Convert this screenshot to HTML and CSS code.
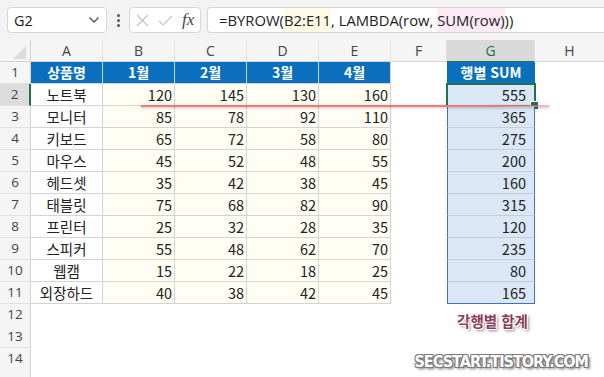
FILE: index.html
```html
<!DOCTYPE html>
<html lang="ko">
<head>
    <meta charset="UTF-8">
    <title>BYROW 예제</title>
    <link rel="stylesheet" href="styles.css">
</head>
<body>

    <!-- 수식 입력줄 -->
    <div class="fbar">
        <div class="namebox">
            <span>G2</span>
            <svg width="12" height="8" viewBox="0 0 12 8"><path d="M1.5 1.5 L6 6 L10.5 1.5" fill="none" stroke="#555" stroke-width="1.3"/></svg>
        </div>
        <div class="dots"><i></i><i></i><i></i></div>
        <div class="fxbox">
            <svg width="13" height="13" viewBox="0 0 13 13"><path d="M1 1 L12 12 M12 1 L1 12" stroke="#c4c4c4" stroke-width="1.2"/></svg>
            <svg width="15" height="13" viewBox="0 0 15 13"><path d="M1 7 L5 11 L14 2" fill="none" stroke="#c4c4c4" stroke-width="1.2"/></svg>
            <span class="fx">fx</span>
        </div>
        <div class="formula">
            =BYROW(<span class="ref-a">B2:E11</span>, LAMBDA(row, <span class="ref-b">SUM(row)</span>))
        </div>
    </div>

    <!-- 시트 -->
    <div class="sheet">
        <div class="row colhead">
            <div class="corner"></div>
            <div class="ch">A</div><div class="ch">B</div><div class="ch">C</div><div class="ch">D</div>
            <div class="ch">E</div><div class="ch">F</div><div class="ch active">G</div><div class="ch last">H</div>
        </div>

        <div class="row">
            <div class="rh">1</div>
            <div class="c head">상품명</div><div class="c head">1월</div><div class="c head">2월</div>
            <div class="c head">3월</div><div class="c head">4월</div>
            <div class="c"></div><div class="c head g">행별 SUM</div><div class="c"></div>
        </div>
        <div class="row">
            <div class="rh active">2</div>
            <div class="c name">노트북</div><div class="c num">120</div><div class="c num">145</div>
            <div class="c num">130</div><div class="c num">160</div>
            <div class="c"></div><div class="c sum top sel">555</div><div class="c"></div>
        </div>
        <div class="row">
            <div class="rh">3</div>
            <div class="c name">모니터</div><div class="c num">85</div><div class="c num">78</div>
            <div class="c num">92</div><div class="c num">110</div>
            <div class="c"></div><div class="c sum">365</div><div class="c"></div>
        </div>
        <div class="row">
            <div class="rh">4</div>
            <div class="c name">키보드</div><div class="c num">65</div><div class="c num">72</div>
            <div class="c num">58</div><div class="c num">80</div>
            <div class="c"></div><div class="c sum">275</div><div class="c"></div>
        </div>
        <div class="row">
            <div class="rh">5</div>
            <div class="c name">마우스</div><div class="c num">45</div><div class="c num">52</div>
            <div class="c num">48</div><div class="c num">55</div>
            <div class="c"></div><div class="c sum">200</div><div class="c"></div>
        </div>
        <div class="row">
            <div class="rh">6</div>
            <div class="c name">헤드셋</div><div class="c num">35</div><div class="c num">42</div>
            <div class="c num">38</div><div class="c num">45</div>
            <div class="c"></div><div class="c sum">160</div><div class="c"></div>
        </div>
        <div class="row">
            <div class="rh">7</div>
            <div class="c name">태블릿</div><div class="c num">75</div><div class="c num">68</div>
            <div class="c num">82</div><div class="c num">90</div>
            <div class="c"></div><div class="c sum">315</div><div class="c"></div>
        </div>
        <div class="row">
            <div class="rh">8</div>
            <div class="c name">프린터</div><div class="c num">25</div><div class="c num">32</div>
            <div class="c num">28</div><div class="c num">35</div>
            <div class="c"></div><div class="c sum">120</div><div class="c"></div>
        </div>
        <div class="row">
            <div class="rh">9</div>
            <div class="c name">스피커</div><div class="c num">55</div><div class="c num">48</div>
            <div class="c num">62</div><div class="c num">70</div>
            <div class="c"></div><div class="c sum">235</div><div class="c"></div>
        </div>
        <div class="row">
            <div class="rh">10</div>
            <div class="c name">웹캠</div><div class="c num">15</div><div class="c num">22</div>
            <div class="c num">18</div><div class="c num">25</div>
            <div class="c"></div><div class="c sum">80</div><div class="c"></div>
        </div>
        <div class="row">
            <div class="rh">11</div>
            <div class="c name">외장하드</div><div class="c num">40</div><div class="c num">38</div>
            <div class="c num">42</div><div class="c num">45</div>
            <div class="c"></div><div class="c sum bottom">165</div><div class="c"></div>
        </div>
        <div class="row">
            <div class="rh">12</div>
            <div class="blank"></div>
            <div class="note">각행별 합계</div>
        </div>
        <div class="row">
            <div class="rh">13</div>
        </div>
        <div class="row">
            <div class="rh">14</div>
            <div class="blank"></div>
            <div class="mark">SECSTART.TISTORY.COM</div>
        </div>
        <div class="row">
            <div class="rh"></div>
        </div>

        <!-- 2행 강조선 -->
        <div class="redline"></div>
    </div>

</body>
</html>
```

FILE: styles.css
```css
* {
    margin: 0;
    padding: 0;
    box-sizing: border-box;
}

body {
    font-family: "Noto Sans CJK KR", "Noto Sans", sans-serif;
    background-color: #fff;
    color: #222;
    width: 604px;
    height: 377px;
    overflow: hidden;
}

/* 수식 입력줄 */
.fbar {
    display: flex;
    align-items: center;
    height: 40px;
    padding-left: 7px;
    background-color: #f3f3f3;
}

.namebox {
    display: flex;
    align-items: center;
    justify-content: space-between;
    width: 100px;
    height: 26px;
    padding: 0 6px 0 6px;
    background-color: #fff;
    border: 1px solid #d6d6d6;
    border-radius: 4px;
    font-family: "Open Sans", sans-serif;
    font-size: 14.5px;
    color: #222;
}

.dots {
    width: 22px;
    display: flex;
    flex-direction: column;
    align-items: center;
    gap: 2px;
}

.dots i {
    width: 3px;
    height: 3px;
    border-radius: 50%;
    background-color: #555;
}

.fxbox {
    display: flex;
    align-items: center;
    gap: 9px;
    width: 72px;
    height: 26px;
    padding-left: 6px;
    background-color: #fff;
    border: 1px solid #d6d6d6;
    border-radius: 4px;
}

.fx {
    font-family: "Liberation Serif", serif;
    font-style: italic;
    font-size: 17px;
    color: #444;
}

.formula {
    flex: 1;
    height: 26px;
    margin-left: 6px;
    padding-left: 11px;
    background-color: #fff;
    border: 1px solid #d6d6d6;
    border-right: none;
    border-radius: 4px 0 0 4px;
    font-family: "Open Sans", sans-serif;
    font-size: 14.8px;
    line-height: 24px;
    white-space: nowrap;
    color: #222;
}

.ref-a {
    background-color: #fffbe6;
    display: inline-block;
}

.ref-b {
    background-color: #fdeaf6;
    display: inline-block;
}

/* 시트 */
.sheet {
    position: relative;
}

.row {
    display: grid;
    grid-template-columns: 31px 72px 72px 72px 72px 72px 56px 88px 1fr;
    height: 22px;
}

.colhead {
    background-color: #f5f5f5;
    border-bottom: 1px solid #d4d4d4;
}

.corner {
    position: relative;
    border-right: 1px solid #d4d4d4;
}

.corner::after {
    content: "";
    position: absolute;
    right: 4px;
    bottom: 4px;
    border-style: solid;
    border-width: 0 0 13px 13px;
    border-color: transparent transparent #dcdcdc transparent;
}

.ch {
    text-align: center;
    font-family: "Open Sans", sans-serif;
    font-size: 14px;
    line-height: 21px;
    color: #444;
    border-right: 1px solid #e0e0e0;
}

.ch.last {
    border-right: none;
}

.ch.active {
    background-color: #d9d9d9;
    color: #217346;
    border-bottom: 2px solid #217346;
}

.rh {
    text-align: center;
    font-family: "Open Sans", sans-serif;
    font-size: 13.5px;
    line-height: 21px;
    color: #444;
    background-color: #f5f5f5;
    border-right: 1px solid #d4d4d4;
    border-bottom: 1px solid #e2e2e2;
}

.rh.active {
    background-color: #dcdcdc;
    border-right: 2px solid #217346;
}

.c {
    font-size: 14.5px;
    line-height: 21px;
    white-space: nowrap;
}

.head {
    background-color: #0a6fbd;
    color: #fff;
    font-weight: bold;
    font-size: 14px;
    text-align: center;
    border-right: 1px solid #d4d4d4;
    border-bottom: 1px solid #d4d4d4;
}

.head.g {
    border-right: none;
    border-bottom: none;
}

.name {
    text-align: center;
    background-color: #fff;
    border-right: 1px solid #d4d4d4;
    border-bottom: 1px solid #d4d4d4;
}

.num {
    text-align: right;
    padding-right: 2px;
    background-color: #fffef4;
    border-right: 1px solid #d4d4d4;
    border-bottom: 1px solid #d4d4d4;
}

.sum {
    position: relative;
    text-align: right;
    padding-right: 8px;
    background-color: #dae7f6;
    border-left: 1px solid #3f6fcc;
    border-right: 1px solid #3f6fcc;
    border-bottom: 1px solid #c9ccd2;
}

.sum.bottom {
    border-bottom: 1px solid #3f6fcc;
}

/* 선택된 셀 */
.sel::before {
    content: "";
    position: absolute;
    left: -2px;
    top: -1px;
    right: -2px;
    bottom: -2px;
    border: 2px solid #217346;
}

.sel::after {
    content: "";
    position: absolute;
    right: -5px;
    bottom: -5px;
    width: 7px;
    height: 7px;
    background-color: #217346;
    border: 1px solid #fff;
}

.blank {
    grid-column: 2 / 8;
}

.note {
    padding-top: 6px;
    padding-left: 3px;
    text-align: center;
    font-weight: bold;
    font-size: 14.5px;
    line-height: 22px;
    color: #8c3b5c;
    white-space: nowrap;
    text-shadow: -1px -1px 0 #fff, 1px -1px 0 #fff, -1px 1px 0 #fff, 1px 1px 0 #fff, 2px 2px 3px rgba(0, 0, 0, 0.55);
}

.mark {
    grid-column: 8 / 10;
    justify-self: end;
    margin-right: 16px;
    padding-top: 3px;
    font-family: "DejaVu Sans Condensed", "DejaVu Sans", sans-serif;
    font-stretch: condensed;
    font-weight: bold;
    font-size: 16px;
    line-height: 22px;
    letter-spacing: -0.95px;
    color: #fff;
    white-space: nowrap;
    text-shadow: -1px -1px 0 #7a7a7a, 1px -1px 0 #7a7a7a, -1px 1px 0 #7a7a7a, 1px 1px 0 #7a7a7a, 2px 2px 3px rgba(0, 0, 0, 0.6);
}

/* 2행 아래 강조선 */
.redline {
    position: absolute;
    left: 141px;
    top: 65px;
    width: 408px;
    height: 2px;
    background: linear-gradient(to right, #f47878 85%, rgba(244, 120, 120, 0.5));
    box-shadow: 0 1px 3px rgba(0, 0, 0, 0.25);
}
```
